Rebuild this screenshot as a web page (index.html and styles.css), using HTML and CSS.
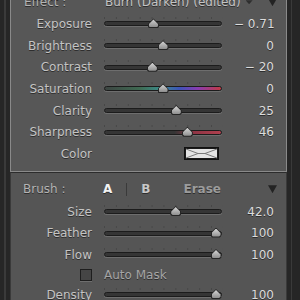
FILE: index.html
```html
<!DOCTYPE html>
<html lang="en">

<head>
    <meta charset="UTF-8">
    <meta name="viewport" content="width=device-width, initial-scale=1.0">
    <title>Adjustment Brush</title>
    <link rel="stylesheet" href="styles.css">
</head>

<body>
    <div class="frame">
        <div class="gutter gutter-left"></div>

        <div class="panel">
            <!-- effect settings -->
            <section class="effect-box">
                <div class="row head">
                    <span class="head-label">Effect :</span>
                    <span class="preset">Burn (Darken) (edited)</span>
                    <span class="caret"></span>
                    <span class="fold"></span>
                </div>

                <div class="row">
                    <span class="label">Exposure</span>
                    <div class="slider"><div class="track"></div><div class="travel"><span class="thumb" style="left: 41%"></span></div></div>
                    <span class="value">&minus; 0.71</span>
                </div>
                <div class="row">
                    <span class="label">Brightness</span>
                    <div class="slider"><div class="track"></div><div class="travel"><span class="thumb" style="left: 50%"></span></div></div>
                    <span class="value">0</span>
                </div>
                <div class="row">
                    <span class="label">Contrast</span>
                    <div class="slider"><div class="track"></div><div class="travel"><span class="thumb" style="left: 40%"></span></div></div>
                    <span class="value">&minus; 20</span>
                </div>
                <div class="row">
                    <span class="label">Saturation</span>
                    <div class="slider"><div class="track track-sat"></div><div class="travel"><span class="thumb" style="left: 50%"></span></div></div>
                    <span class="value">0</span>
                </div>
                <div class="row">
                    <span class="label">Clarity</span>
                    <div class="slider"><div class="track"></div><div class="travel"><span class="thumb" style="left: 62.5%"></span></div></div>
                    <span class="value">25</span>
                </div>
                <div class="row">
                    <span class="label">Sharpness</span>
                    <div class="slider"><div class="track track-sharp"></div><div class="travel"><span class="thumb" style="left: 73%"></span></div></div>
                    <span class="value">46</span>
                </div>
                <div class="row">
                    <span class="label">Color</span>
                    <div class="swatch-cell">
                        <svg class="swatch" width="35" height="13" viewBox="0 0 35 13">
                            <rect x="0.5" y="0.5" width="34" height="12" fill="#1a1a1a" stroke="#111"/>
                            <rect x="2" y="2" width="31" height="9" fill="#e4e4e4"/>
                            <path d="M2 2 L14 6.5 L2 11 M33 2 L21 6.5 L33 11 M14 6.5 H21" fill="none" stroke="#7a7a7a" stroke-width="1"/>
                        </svg>
                    </div>
                    <span class="value"></span>
                </div>
            </section>

            <!-- brush settings -->
            <section class="brush-box">
                <div class="row head">
                    <span class="head-label">Brush :</span>
                    <div class="brush-tabs">
                        <span class="tab tab-on">A</span>
                        <span class="tab-sep"></span>
                        <span class="tab">B</span>
                        <span class="tab tab-erase">Erase</span>
                    </div>
                    <span class="fold"></span>
                </div>

                <div class="row">
                    <span class="label">Size</span>
                    <div class="slider"><div class="track"></div><div class="travel"><span class="thumb" style="left: 62%"></span></div></div>
                    <span class="value">42.0</span>
                </div>
                <div class="row">
                    <span class="label">Feather</span>
                    <div class="slider"><div class="track"></div><div class="travel"><span class="thumb" style="left: 100%"></span></div></div>
                    <span class="value">100</span>
                </div>
                <div class="row">
                    <span class="label">Flow</span>
                    <div class="slider"><div class="track"></div><div class="travel"><span class="thumb" style="left: 100%"></span></div></div>
                    <span class="value">100</span>
                </div>
                <div class="row row-check">
                    <span class="label"><span class="checkbox"></span></span>
                    <span class="check-text">Auto Mask</span>
                    <span class="value"></span>
                </div>
                <div class="row">
                    <span class="label">Density</span>
                    <div class="slider"><div class="track"></div><div class="travel"><span class="thumb" style="left: 100%"></span></div></div>
                    <span class="value">100</span>
                </div>
            </section>
        </div>

        <div class="gutter gutter-right"></div>
    </div>
</body>

</html>
```

FILE: styles.css
```css
* {
    box-sizing: border-box;
}

body {
    margin: 0;
    background-color: #262626;
    font-family: "DejaVu Sans", sans-serif;
    font-size: 12px;
    color: #c4c4c4;
}

.frame {
    display: flex;
    width: 300px;
    height: 300px;
    overflow: hidden;
}

.gutter {
    flex: none;
}

.gutter-left {
    width: 10px;
    background: linear-gradient(to right, #262626 0 4px, #3a3a3a 4px 6px, #262626 6px);
}

.gutter-right {
    flex: 1;
    background: linear-gradient(to right, #262626 0 4px, #3a3a3a 4px 5px, #262626 5px);
}

.panel {
    width: 277px;
    flex: none;
}

.effect-box {
    margin-top: -8.5px;
    padding-bottom: 6px;
    background-color: #575757;
    border: 1px solid #8a8a8a;
    border-top: none;
}

.brush-box {
    padding-top: 5px;
    height: 140px;
    background-color: #555555;
    border-top: 1px solid #2c2c2c;
    border-left: 1px solid #3a3a3a;
    border-right: 1px solid #3a3a3a;
}

.row {
    display: grid;
    grid-template-columns: 81px 118px 40px;
    column-gap: 12px;
    align-items: center;
    height: 21.67px;
    text-shadow: 0 1px 0 #2e2e2e;
}

.brush-box .row {
    height: 21.5px;
}

.brush-box .row.head {
    height: 23px;
}

.brush-box .row-check {
    height: 18.5px;
}

.label {
    text-align: right;
    white-space: nowrap;
}

.value {
    text-align: right;
    color: #dcdcdc;
    white-space: nowrap;
}

/* section headers */
.head {
    display: flex;
    align-items: center;
    column-gap: 0;
}

.head-label {
    width: 94px;
    padding-left: 13px;
    flex: none;
    color: #b4b4b4;
    white-space: nowrap;
}

.brush-box .head-label {
    width: 92px;
    padding-left: 12px;
}

.preset {
    color: #c4c4c4;
    white-space: nowrap;
}

.caret {
    flex: none;
    width: 7px;
    height: 4px;
    margin-left: 5px;
    background-color: #2e2e2e;
    clip-path: polygon(0 0, 100% 0, 50% 100%);
}

.fold {
    flex: none;
    width: 9px;
    height: 8px;
    margin-left: auto;
    margin-right: 9px;
    background-color: #232323;
    clip-path: polygon(0 0, 100% 0, 50% 100%);
}

.brush-tabs {
    display: flex;
    align-items: center;
    font-weight: bold;
    color: #c8c8c8;
}

.tab-on {
    color: #f2f2f2;
}

.tab-sep {
    width: 1px;
    height: 13px;
    margin: 0 14px 0 14px;
    background-color: #3a3a3a;
}

.tab-erase {
    margin-left: 33px;
    color: #9c9c9c;
}

/* sliders */
.slider {
    position: relative;
    height: 100%;
}

.slider::before {
    content: "";
    position: absolute;
    left: 0;
    right: -1px;
    top: calc(50% - 7px);
    height: 2px;
    background-image: linear-gradient(to right, #474747 1px, transparent 1px);
    background-size: 10% 100%;
}

.track {
    position: absolute;
    left: 0;
    right: 0;
    top: 50%;
    height: 5px;
    margin-top: -2.5px;
    border-radius: 3px;
    background-color: #353535;
    border: 1px solid #1c1c1c;
    box-shadow: 0 1px 0 rgba(255, 255, 255, 0.14);
}

.track-sat {
    background: linear-gradient(to right, #3d4542 0%, #3f6a52 30%, #3b8c8a 48%, #3d54b8 64%, #8a3cb0 80%, #c23a44 100%);
}

.track-sharp {
    background: linear-gradient(to right, #353535 60%, #8c3444 75%, #b0404e 100%);
}

.travel {
    position: absolute;
    top: 0;
    bottom: 0;
    left: 6px;
    right: 6px;
}

.thumb {
    position: absolute;
    top: 50%;
    width: 11px;
    height: 10px;
    margin: -5.5px 0 0 -5.5px;
    background-color: #262626;
    clip-path: polygon(50% 0, 100% 55%, 100% 85%, 85% 100%, 15% 100%, 0 85%, 0 55%);
}

.thumb::after {
    content: "";
    position: absolute;
    inset: 1px 1px 1px 1px;
    background: linear-gradient(#d6d6d6, #8e8e8e);
    clip-path: polygon(50% 0, 100% 55%, 100% 85%, 85% 100%, 15% 100%, 0 85%, 0 55%);
}

/* color swatch */
.swatch-cell {
    display: flex;
    justify-content: flex-end;
    padding-right: 3px;
}

.swatch {
    display: block;
}

/* auto mask */
.row-check .label {
    display: flex;
    justify-content: flex-end;
}

.checkbox {
    width: 12px;
    height: 12px;
    background-color: #454545;
    border: 1px solid #1e1e1e;
    box-shadow: 0 1px 0 rgba(255, 255, 255, 0.15);
}

.check-text {
    color: #a6a6a6;
    white-space: nowrap;
}
```
